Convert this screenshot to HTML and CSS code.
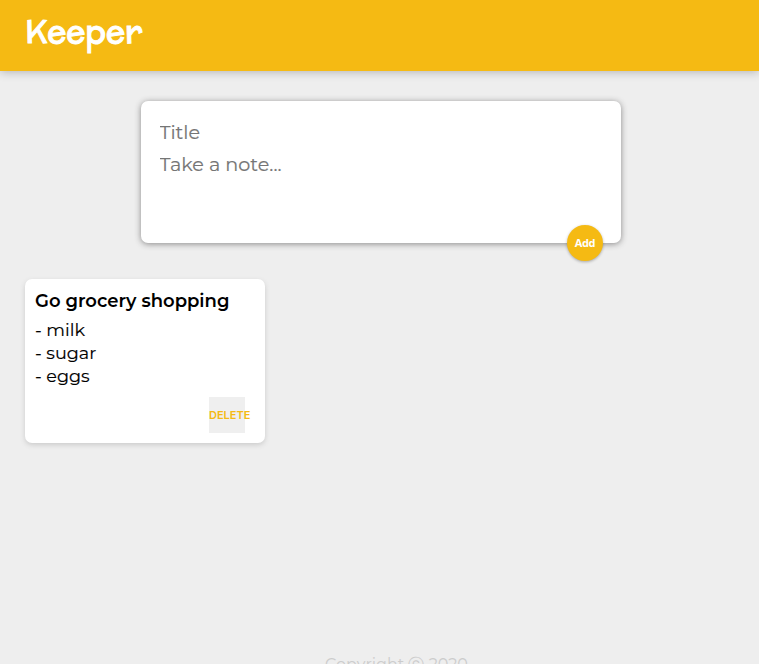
FILE: index.html
```html
<!DOCTYPE html>
<html lang="en">
<head>
<meta charset="utf-8">
<title>Keeper</title>
<link rel="stylesheet" href="styles.css">
</head>
<body>
<header><h1>Keeper</h1></header>
<main>
<form class="create-note">
<input name="title" placeholder="Title">
<textarea name="content" placeholder="Take a note..." rows="3"></textarea>
<button type="button" class="add">Add</button>
</form>
<article class="note">
<h2>Go grocery shopping</h2>
<p>- milk
- sugar
- eggs</p>
<button type="button" class="delete">DELETE</button>
</article>
</main>
<footer><p>Copyright ⓒ 2020</p></footer>
</body>
</html>
```

FILE: styles.css
```css
* { padding: 0; margin: 0; box-sizing: border-box; }
html { font-family: "Montserrat", "Inter", sans-serif; }
body { background: #eee; height: 664px; overflow: hidden; display: flex; flex-direction: column; }
header { background: #f5ba13; height: 71px; padding: 10px 25px; box-shadow: 0 0 10px rgba(0,0,0,.3); flex: none; }
h1 { color: #fff; font: 400 32px/42px "McLaren", "Lato", sans-serif; -webkit-text-stroke: .9px #fff; }
main { flex: none; height: 584px; }
.create-note { position: relative; width: 480px; height: 142px; margin: 30px 0 0 141px; background: #fff; border-radius: 7px; padding: 15px 18px 15px 18.5px; box-shadow: 0 1px 6px rgb(138,137,137); }
.create-note input, .create-note textarea { display: block; width: 100%; border: none; outline: none; resize: none; font: 19.2px/24px "Montserrat", "Inter", sans-serif; background: transparent; }
.create-note input { height: 32px; }
.create-note textarea { padding-top: 4px; height: 76px; }
::placeholder { color: #757575; -webkit-text-stroke: .15px #757575; }
.add { position: absolute; right: 18px; bottom: -18px; width: 36px; height: 36px; padding-bottom: 1px; border: none; border-radius: 50%; background: #f5ba13; color: #fff; font: 700 11px "Open Sans", sans-serif; letter-spacing: -.4px; box-shadow: 0 1px 3px rgba(0,0,0,.3); }
.note { width: 240px; height: 164px; margin: 36px 0 0 25px; padding: 10px; background: #fff; border-radius: 7px; box-shadow: 0 2px 5px #ccc; }
.note h2 { font-size: 18px; line-height: 24px; font-weight: 600; white-space: nowrap; }
.note p { font-size: 17.6px; line-height: 23px; margin: 5px 0 10px; white-space: pre-line; -webkit-text-stroke: .15px #000; }
.delete { display: block; margin: 0 10px 0 auto; width: 36px; height: 36px; border: none; background: #efefef; color: #f5ba13; font: 600 11px "Inter", sans-serif; white-space: nowrap; }
footer { text-align: center; color: #ccc; font-size: 16px; line-height: 20px; padding-left: 34px; }
```
